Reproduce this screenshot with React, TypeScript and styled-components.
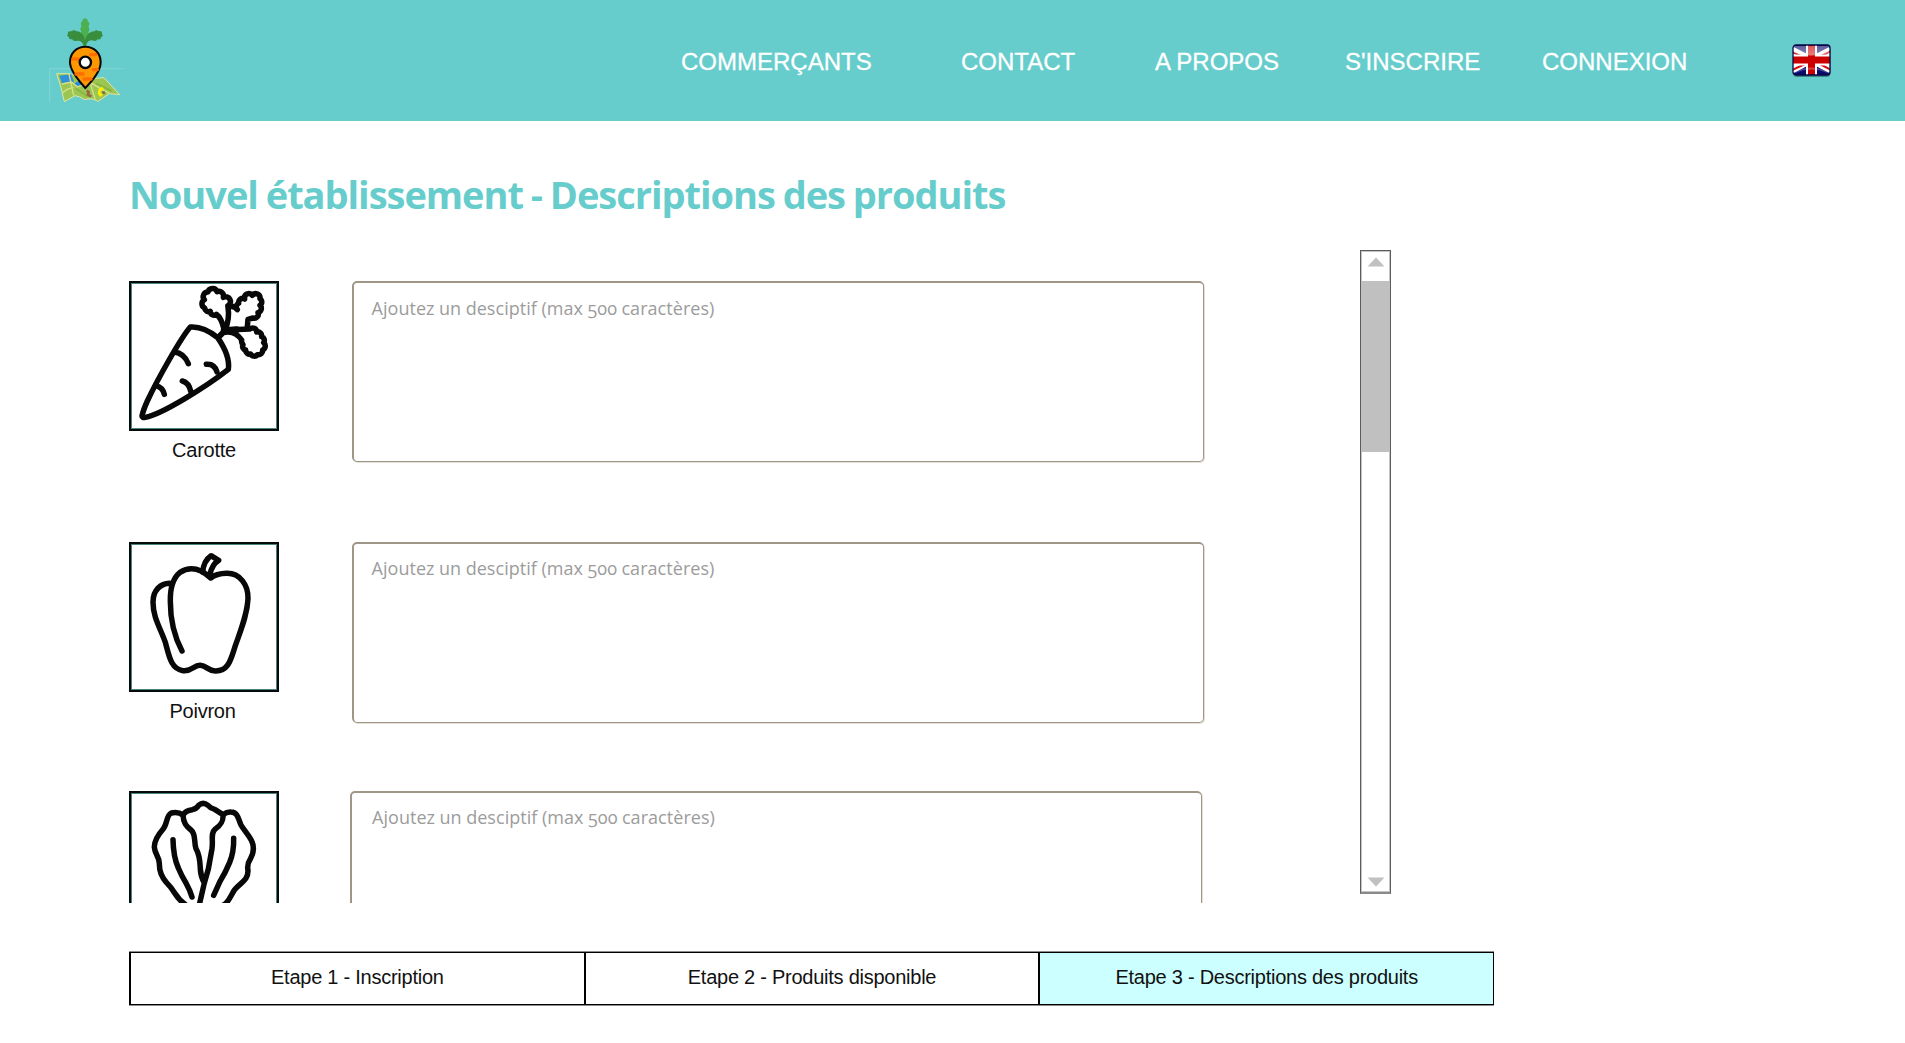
import React from "react";
import styled, { createGlobalStyle } from "styled-components";

const GlobalStyle = createGlobalStyle`
  * { box-sizing: border-box; }
  body { margin: 0; background: #fff; font-family: "Liberation Sans", Arial, sans-serif; }
`;

const Page = styled.div`
  width: 1905px;
  height: 1043px;
  overflow: hidden;
`;

const Header = styled.header`
  display: flex;
  height: 121px;
  padding-left: 30px;
  background: #66cdcc;
`;

const LogoLink = styled.a`
  width: 120px;
  margin-right: 531px;
  svg { display: block; }
`;

const Nav = styled.nav`
  display: grid;
  grid-template-columns: 280px 194px 190px 197px 250px 40px;
  align-items: center;
`;

const NavLink = styled.a`
  padding-top: 3px;
  color: #fff;
  font-size: 24px;
  line-height: 28px;
  white-space: nowrap;
  -webkit-text-stroke: 0.3px #fff;
`;

const FlagButton = styled.a`
  display: block;
  height: 34px;
  margin-top: 1px;
`;

const Main = styled.main`
  padding: 47px 0 0 129px;
`;

const Title = styled.h1`
  margin: 0;
  color: #66cdcc;
  font-family: "Open Sans", "Noto Sans", sans-serif;
  font-size: 38px;
  font-weight: 700;
  line-height: 52px;
  letter-spacing: -1.03px;
  word-spacing: -1px;
  white-space: nowrap;
`;

const Content = styled.div`
  display: flex;
  margin-top: 30px;
  height: 653px;
`;

const List = styled.div`
  display: flex;
  flex-direction: column;
  width: 1231px;
  padding-top: 31px;
  overflow: hidden;
`;

const ProductRow = styled.section<{ $height: number; $gap: number }>`
  display: flex;
  flex: none;
  align-items: flex-start;
  gap: ${(p) => p.$gap}px;
  height: ${(p) => p.$height}px;
`;

const Product = styled.div`
  display: flex;
  flex-direction: column;
  width: 150px;
`;

const Picture = styled.div`
  height: 150px;
  border: 2px solid #050b0b;
  box-shadow: inset 0 0 0 1px #4c8580;
  svg { display: block; margin: -2px; }
`;

const Label = styled.span<{ $shift: number }>`
  margin-top: 7px;
  padding-right: ${(p) => p.$shift}px;
  color: #111;
  font-size: 20px;
  line-height: 24px;
  letter-spacing: -0.25px;
  text-align: center;
`;

const Description = styled.textarea<{ $indent: number; $top: number }>`
  display: block;
  width: 852px;
  height: 181px;
  margin: 0;
  padding: ${(p) => p.$top}px ${(p) => p.$indent}px;
  border: 1px solid #a09688;
  border-top-width: 2px;
  border-left-width: 2px;
  border-radius: 5px;
  outline: none;
  resize: none;
  box-shadow: 1px 1px 0 #e3dfd9;
  background: #fff;
  color: #333;
  font-family: "Open Sans", "Noto Sans", sans-serif;
  font-size: 18px;
  line-height: 26px;
  word-spacing: -0.3px;
  letter-spacing: 0.05px;
  font-feature-settings: "onum";
  &::placeholder { color: #9c9c9c; opacity: 1; }
`;

const ScrollTrack = styled.div`
  display: flex;
  flex-direction: column;
  justify-content: space-between;
  width: 31px;
  height: 644px;
  border: 1px solid #5c5c5c;
  border-bottom: 2px solid #8a8a8a;
  padding-top: 1px;
  box-shadow: inset 0 0 0 1px #c4c4c4;
  background: #fff;
`;

const ScrollArrow = styled.div`
  display: flex;
  flex: none;
  justify-content: center;
  height: 29px;
  padding-top: 5px;
  &:last-child { height: 15px; padding-top: 0; }
`;

const ScrollThumb = styled.div`
  height: 170.5px;
  margin-bottom: auto;
  background: #c0c0c0;
`;

const Steps = styled.ol`
  display: flex;
  width: 1365px;
  height: 55px;
  margin: 48px 0 0;
  padding: 0;
  list-style: none;
  border-top: 1px solid #8c8c8c;
  border-bottom: 1px solid #8c8c8c;
`;

const Step = styled.li<{ $active?: boolean; $first?: boolean }>`
  display: flex;
  flex: 1;
  align-items: center;
  justify-content: center;
  border: 1px solid #000;
  border-left-width: ${(p) => (p.$first ? 2 : 1)}px;
  padding-bottom: 2px;
  background: ${(p) => (p.$active ? "#ccffff" : "#fff")};
  color: #111;
  font-size: 20px;
  letter-spacing: -0.25px;
  white-space: nowrap;
`;

const Logo = () => (
  <svg width="120" height="121" viewBox="0 0 360 363" fill="none">
    <path d="M59 206V307M59 206H280" stroke="#8ad9d8" strokeWidth="2" />
    <path d="M80 221L118 221Q145 232 166 232Q190 238 222 233L269 284L238 281L204 304Q184 292 164 299Q148 288 135 287L103 305Q93 257 80 221Z" fill="#9cc653" stroke="#e0e6a8" strokeWidth="3" />
    <path d="M88 227L124 223L132 245L96 250Z" fill="#2f90dc" />
    <path d="M132 251L149 241L158 260L144 259Z" fill="#238be0" />
    <path d="M96 252L124 246L142 260L184 250L238 280M117 222L131 286M130 262Q107 267 98 279M180 248L196 299" stroke="#d8df85" strokeWidth="4" />
    <path d="M137 266L175 290M198 250L246 273" stroke="#85b43d" strokeWidth="5" />
    <path d="M206 266L217 260L222 268L210 276L220 283L210 291L203 281Z" fill="#ffed00" />
    <path d="M170 272L176 276L174 284L184 290" stroke="#9c6544" strokeWidth="8" />
    <circle cx="221" cy="278" r="5" fill="#80704b" />
    <path d="M160 137L159 112Q148 105 154 94Q147 87 155 79Q149 69 157 64Q158 55 166 55Q173 57 174 64Q181 71 175 80Q181 88 175 96Q180 105 169 113L167 137Z" fill="#4caf50" />
    <path d="M161 137Q155 119 138 123Q128 124 126 117Q116 120 117 111Q108 107 114 101Q112 92 124 94Q132 88 138 93Q160 94 165 120Q173 94 193 94Q199 87 206 94Q217 91 216 102Q222 108 213 112Q212 121 203 118Q197 126 188 121Q172 120 168 137Z" fill="#388e3c" />
    <path d="M166 264C153 249 120 216 120 187C120 159 140 140 166 140S212 159 212 187C212 217 181 249 166 264Z" fill="#ff9800" stroke="#080808" strokeWidth="6" />
    <path d="M182 164H197M129 177H145M190 209H202M138 222H159M162 237H183" stroke="#ff6d00" strokeWidth="10" strokeLinecap="round" />
    <circle cx="166" cy="187" r="17" fill="#fff" stroke="#080808" strokeWidth="7" />
  </svg>
);

const UkFlag = () => (
  <svg width="40" height="34" viewBox="0 0 40 34">
    <defs>
      <clipPath id="flagShape"><rect x="1" y="1" width="37" height="30" rx="3" /></clipPath>
      <linearGradient id="gloss" x1="0" y1="0" x2="0" y2="1">
        <stop offset="0" stopColor="#fff" stopOpacity=".35" />
        <stop offset="1" stopColor="#fff" stopOpacity=".5" />
      </linearGradient>
    </defs>
    <rect x="1" y="2.5" width="37.5" height="30.5" rx="4" fill="#17504f" opacity=".55" />
    <g clipPath="url(#flagShape)">
      <rect width="40" height="32" fill="#09096e" />
      <path d="M0 6L39 26M39 6L0 26" stroke="#fff" strokeWidth="7" />
      <path d="M0 8L13 14M39 7L25 14M13 20L0 26M26 19L39 26" stroke="#d30b14" strokeWidth="2" />
      <path d="M19.5 0V32M0 16H40" stroke="#fff" strokeWidth="11" />
      <path d="M19.5 0V32M0 16H40" stroke="#cd0000" strokeWidth="7" />
      <path d="M2 2H37V9Q19 14 2 9Z" fill="url(#gloss)" />
      <path d="M3 28Q19 21 36 28" stroke="#fff" strokeOpacity=".25" strokeWidth="2" fill="none" />
    </g>
    <rect x="1" y="1" width="37" height="30" rx="3" fill="none" stroke="#090945" strokeWidth="1.3" />
  </svg>
);

const Drawing = ({ viewBox, children }: { viewBox: string; children: React.ReactNode }) => (
  <svg width="150" height="150" viewBox={viewBox} fill="none" stroke="#080808" strokeWidth="16.5" strokeLinecap="round" strokeLinejoin="round">
    {children}
  </svg>
);

const Carrot = () => (
  <Drawing viewBox="27 31 450 450">
    <path d="M211 169C184 199 112 327 82 391Q69 420 66 436Q66 442 76 440C125 431 257 349 325 296Q331 256 293 201Q251 166 211 169Z" />
    <path d="M163 244Q192 247 205 279M259 281Q284 279 291 304M187 331Q207 336 213 364M108 345Q128 350 133 371" />
    <path d="M324 105A14 14 0 0 0 310 80A14 14 0 0 0 291 63A14 14 0 0 0 264 64A14 14 0 0 0 253 87A14 14 0 0 0 254 112A12 12 0 0 0 271 122A11 11 0 0 0 289 131Q304 142 311 172" />
    <path d="M324 110Q330 145 314 182L298 198" />
    <path d="M328 108Q343 104 352 117A12 12 0 0 1 356 98A12 12 0 0 1 374 85A13 13 0 0 1 397 74A13 13 0 0 1 420 84A12 12 0 0 1 420 104A13 13 0 0 1 414 126A12 12 0 0 1 399 142L384 146L382 168" />
    <path d="M301 193Q314 178 335 177L390 175A12 12 0 0 1 410 184A12 12 0 0 1 425 198A12 12 0 0 1 431 216A13 13 0 0 1 428 238A13 13 0 0 1 412 252A12 12 0 0 1 392 250A12 12 0 0 1 377 238A11 11 0 0 1 369 222Q363 213 365 208C355 193 337 181 315 185" />
    <path d="M312 180L350 177" strokeWidth="20" />
  </Drawing>
);

const Pepper = () => (
  <Drawing viewBox="27 36 450 450">
    <path d="M186 363C165 323 151 274 151 215C150 174 158 145 180 127Q210 108 243 123Q257 130 272 144Q288 131 320 130C359 129 385 164 384 206C382 253 363 298 346 347C332 389 326 424 286 423C264 423 261 407 241 406C220 405 218 425 189 422C153 418 147 377 136 337C120 292 99 262 99 216C99 180 122 161 149 160" />
    <path d="M248 126Q251 92 273 77L296 91Q276 103 270 133" />
  </Drawing>
);

const Lettuce = () => (
  <Drawing viewBox="27 33 450 450">
    <path d="M189 105Q174 94 154 99C139 105 142 132 130 146C116 162 102 180 103 202C105 226 119 230 118 252C118 273 123 289 139 307Q153 321 164 339Q180 365 205 380H298C325 374 330 349 344 329C361 307 384 303 384 272Q380 253 392 235C401 218 404 200 394 181C384 162 372 151 363 135C355 119 355 97 333 96Q321 95 309 104" />
    <path d="M189 105Q197 91 217 89Q231 85 236 76Q249 64 264 76Q271 85 284 88L309 104C311 126 301 137 285 148C271 160 280 180 276 206L265 267L253 309L238 374M189 105C190 129 199 139 213 150C229 163 221 188 228 206C240 226 240 246 241 267Q242 289 253 309" />
    <path d="M159 179Q160 231 175 264Q184 286 198 309Q211 333 216 351M341 175Q342 216 329 247Q316 278 300 304L281 346" />
  </Drawing>
);

const placeholder = "Ajoutez un desciptif (max 500 caractères)";

const products = [
  { name: "Carotte", Icon: Carrot, height: 261, gap: 73, indent: 17.5, top: 12, shift: 0 },
  { name: "Poivron", Icon: Pepper, height: 249, gap: 73, indent: 17.5, top: 11, shift: 3 },
  { name: "", Icon: Lettuce, height: 261, gap: 71, indent: 20, top: 11, shift: 0 },
];

export default function App() {
  return (
    <Page>
      <GlobalStyle />
      <Header>
        <LogoLink><Logo /></LogoLink>
        <Nav>
          <NavLink>COMMERÇANTS</NavLink>
          <NavLink>CONTACT</NavLink>
          <NavLink>A PROPOS</NavLink>
          <NavLink>S'INSCRIRE</NavLink>
          <NavLink>CONNEXION</NavLink>
          <FlagButton><UkFlag /></FlagButton>
        </Nav>
      </Header>
      <Main>
        <Title>Nouvel établissement - Descriptions des produits</Title>
        <Content>
          <List>
            {products.map(({ name, Icon, height, gap, indent, top, shift }, i) => (
              <ProductRow key={i} $height={height} $gap={gap}>
                <Product>
                  <Picture><Icon /></Picture>
                  {name && <Label $shift={shift}>{name}</Label>}
                </Product>
                <Description $indent={indent} $top={top} placeholder={placeholder} />
              </ProductRow>
            ))}
          </List>
          <ScrollTrack>
            <ScrollArrow><svg width="18" height="10"><path d="M.5 9.5L9 .5L17.5 9.5Z" fill="#c0c0c0" /></svg></ScrollArrow>
            <ScrollThumb />
            <ScrollArrow><svg width="18" height="10"><path d="M.5 .5L9 9.5L17.5 .5Z" fill="#c0c0c0" /></svg></ScrollArrow>
          </ScrollTrack>
        </Content>
        <Steps>
          <Step $first>Etape 1 - Inscription</Step>
          <Step>Etape 2 - Produits disponible</Step>
          <Step $active>Etape 3 - Descriptions des produits</Step>
        </Steps>
      </Main>
    </Page>
  );
}
